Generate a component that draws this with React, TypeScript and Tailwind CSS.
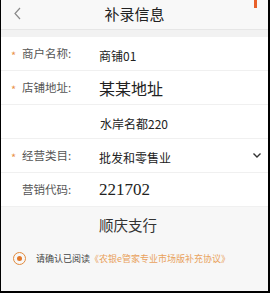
import React from "react";

const cjk = { fontFamily: '"Noto Sans CJK SC", "Noto Sans", sans-serif' };

function Row({
  label,
  required,
  children,
  right,
}: {
  label?: string;
  required?: boolean;
  children: React.ReactNode;
  right?: React.ReactNode;
}) {
  return (
    <div className="flex h-[34px] items-center border-b border-[#f0f0f0] bg-white pl-[10px] pr-[6px]">
      <span className="w-[11px] pt-[3px] text-[11px] leading-none text-[#e9914c]">{required ? "*" : ""}</span>
      <span className="w-[77px] text-[11.5px] text-[#555]">{label ? label + ":" : ""}</span>
      <div className="flex-1">{children}</div>
      {right}
    </div>
  );
}

export default function App() {
  return (
    <div className="h-[293px] w-[270px] overflow-hidden bg-black pb-[2px] pl-[1px] pr-[2px]" style={cjk}>
      <div className="flex h-full flex-col bg-[#f7f7f7]">
        <header className="relative flex h-[30px] items-center justify-center border-b border-[#e6e6e6] bg-[#f8f8f8]">
          <svg className="absolute left-[12px] top-[7px]" width="9" height="13" viewBox="0 0 9 13">
            <path d="M7 1 L2 6.5 L7 12" fill="none" stroke="#8a8a8a" strokeWidth="1.2" />
          </svg>
          <span className="text-[15px] text-[#222]">补录信息</span>
          <span className="absolute right-[11px] top-0 h-[8px] w-[3px] bg-[#e8602a]" />
        </header>
        <div className="h-[7px] bg-[#f2f2f2]" />
        <Row label="商户名称" required>
          <span className="text-[12px] text-[#222]">商铺01</span>
        </Row>
        <Row label="店铺地址" required>
          <span className="text-[16px] text-[#222]">某某地址</span>
        </Row>
        <Row>
          <span className="pl-[1px] text-[12px] text-[#222]">水岸名都220</span>
        </Row>
        <Row
          label="经营类目"
          required
          right={
            <svg width="10" height="7" viewBox="0 0 10 7">
              <path d="M1.5 1.5 L5 5 L8.5 1.5" fill="none" stroke="#333" strokeWidth="1.4" />
            </svg>
          }
        >
          <span className="text-[12px] text-[#222]">批发和零售业</span>
        </Row>
        <Row label="营销代码">
          <span className="text-[17px] text-[#222]" style={{ fontFamily: '"Liberation Serif", serif' }}>
            221702
          </span>
        </Row>
        <div className="flex flex-1 flex-col bg-[#f7f7f7]">
          <div className="pl-[98px] pt-[7px] text-[14.5px] text-[#333]">顺庆支行</div>
          <div className="mt-[16px] flex items-center pl-[12px]">
            <span className="flex h-[13px] w-[13px] items-center justify-center rounded-full border border-[#e28a3c]">
              <span className="h-[5px] w-[5px] rounded-full bg-[#e2782a]" />
            </span>
            <span className="ml-[10px] text-[9px] text-[#444]">请确认已阅读</span>
            <span className="text-[9px] text-[#e9a25c]">《农银e管家专业市场版补充协议》</span>
          </div>
        </div>
      </div>
    </div>
  );
}
